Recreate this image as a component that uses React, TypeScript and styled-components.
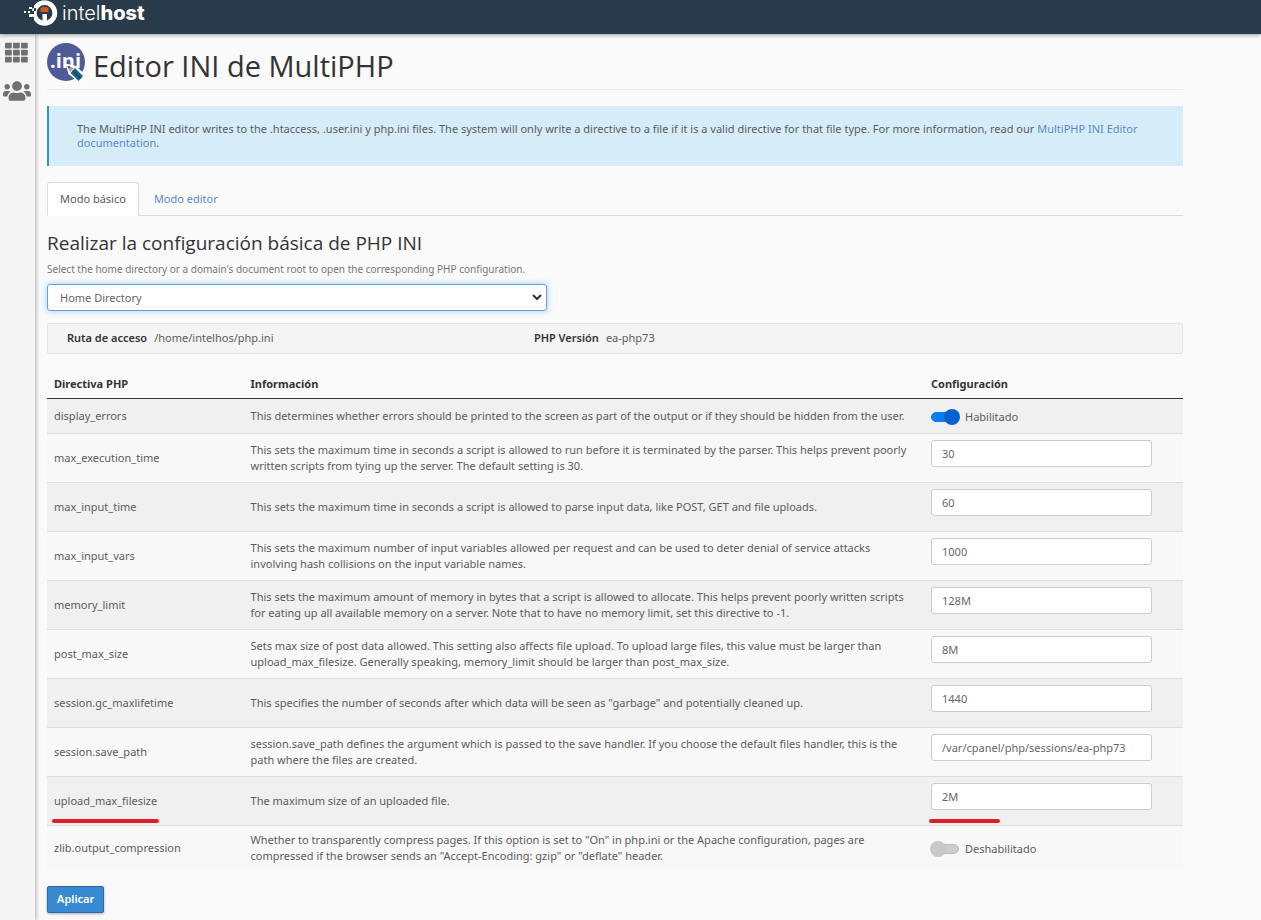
import React, { useState } from "react";
import styled, { createGlobalStyle, css } from "styled-components";
import { FaUsers } from "react-icons/fa";

const GlobalStyle = createGlobalStyle`
  * { box-sizing: border-box; }
  body {
    margin: 0;
    background: #fafafa;
    color: #5c5c5c;
    font-family: "Noto Sans", "Open Sans", sans-serif;
    font-size: 11px;
    line-height: 16px;
  }
  input, select, button { font: inherit; }
`;

const Page = styled.div`
  display: flex;
  flex-direction: column;
  min-height: 100vh;
`;

const TopBar = styled.header`
  display: flex;
  height: 34px;
  padding-left: 24px;
  background: #293a4a;
  box-shadow: 0 1px 4px rgba(0, 0, 0, 0.4);
  z-index: 2;
`;

const Brand = styled.a`
  display: flex;
  align-items: flex-start;
  gap: 4px;
  color: #fff;
  text-decoration: none;
`;

const BrandName = styled.span`
  font-family: Inter, sans-serif;
  font-size: 20px;
  line-height: 26px;
  font-weight: 300;
  strong { font-weight: 800; }
`;

const Body = styled.div`
  display: flex;
  flex: 1;
`;

const Sidebar = styled.nav`
  display: flex;
  flex-direction: column;
  align-items: center;
  gap: 14px;
  flex: 0 0 35px;
  padding: 8px 2px 0 0;
  background: #f4f4f4;
  box-shadow: 0 0 5px rgba(0, 0, 0, 0.45);
`;

const SideLink = styled.a`
  display: flex;
  color: #707070;
`;

const Main = styled.main`
  flex: 1;
  min-width: 0;
  max-width: 1160px;
  padding: 8px 12px;
`;

const PageHeader = styled.div`
  display: flex;
  align-items: flex-start;
  gap: 6px;
  height: 48px;
  border-bottom: 1px solid #ececec;
`;

const Title = styled.h1`
  margin: 4px 0 0;
  color: #333;
  font-family: "Open Sans", sans-serif;
  font-size: 29px;
  line-height: 40px;
  font-weight: 400;
`;

const Callout = styled.div`
  margin-top: 16px;
  padding: 16px 28px;
  border-left: 2px solid #2a9bb5;
  background: #d6edf9;
  line-height: 14px;
  min-height: 60px;
`;

const Link = styled.a`
  color: #5c8ac4;
  text-decoration: none;
`;

const Tabs = styled.div`
  display: flex;
  gap: 2px;
  margin-top: 16px;
  border-bottom: 1px solid #ddd;
`;

const Tab = styled.button<{ $active?: boolean }>`
  height: 34px;
  margin-bottom: -1px;
  padding: 0 12px;
  border: 1px solid transparent;
  border-radius: 3px 3px 0 0;
  background: transparent;
  color: #5c8ac4;
  ${(p) =>
    p.$active &&
    css`
      border-color: #ddd #ddd #fff;
      background: #fff;
      color: #5c5c5c;
    `}
`;

const SectionTitle = styled.h2`
  margin: 15px 0 0;
  color: #333;
  font-family: "Open Sans", sans-serif;
  font-size: 19px;
  line-height: 24px;
  font-weight: 400;
`;

const Hint = styled.label`
  display: block;
  margin-top: 6px;
  color: #777;
  font-size: 10px;
`;

const SelectBox = styled.div`
  position: relative;
  width: 44%;
  margin-top: 7px;
  svg {
    position: absolute;
    right: 5px;
    top: 10px;
    pointer-events: none;
  }
`;

const Select = styled.select`
  display: block;
  width: 100%;
  height: 27px;
  padding: 0 12px;
  appearance: none;
  border: 1px solid #66a0d8;
  border-radius: 3px;
  background: #fff;
  color: #666;
  outline: none;
  box-shadow: 0 0 6px rgba(102, 175, 233, 0.6);
`;

const InfoBar = styled.dl`
  display: flex;
  margin: 12px 0 0;
  padding: 6px 19px;
  border: 1px solid #e3e3e3;
  border-radius: 2px;
  background: #f4f4f4;
  min-height: 31px;
`;

const InfoItem = styled.div`
  display: flex;
  gap: 7px;
  flex: 0 0 42.6%;
  dt { color: #333; font-weight: 600; }
  dd { margin: 0; }
`;

const Table = styled.table`
  width: 100%;
  margin-top: 16px;
  table-layout: fixed;
  border-collapse: collapse;
`;

const HeadCell = styled.th<{ $width?: string }>`
  width: ${(p) => p.$width ?? "auto"};
  height: 28px;
  padding: 0 7px;
  border-bottom: 1px solid #333;
  color: #333;
  font-weight: 700;
  text-align: left;
`;

const Row = styled.tr`
  background: #f8f8f8;
  &:nth-child(odd) { background: #f0f0f0; }
  & + & { border-top: 1px solid #ddd; }
`;

const Cell = styled.td<{ $mark?: number }>`
  position: relative;
  height: 35px;
  padding: 6px 7px;
  ${(p) =>
    p.$mark &&
    css`
      &::after {
        content: "";
        position: absolute;
        left: 5px;
        bottom: 2px;
        width: ${p.$mark}px;
        height: 4px;
        border-radius: 2px;
        background: #dd2025;
      }
    `}
`;

const TextInput = styled.input`
  display: block;
  width: 90%;
  height: 27px;
  margin-bottom: 9px;
  padding: 0 10px;
  border: 1px solid #ccc;
  border-radius: 3px;
  background: #fff;
  color: #666;
`;

const SwitchLabel = styled.label`
  display: flex;
  align-items: center;
  gap: 6px;
  padding-top: 2px;
`;

const Switch = styled.input`
  position: relative;
  width: 28px;
  height: 10px;
  margin: 0;
  appearance: none;
  border: 1px solid #bbb;
  border-radius: 5px;
  background: #ccc;
  &::before {
    content: "";
    position: absolute;
    top: -4px;
    left: -2px;
    width: 16px;
    height: 16px;
    border-radius: 50%;
    background: #c8c8c8;
  }
  &:checked {
    border-color: #0a7bf0;
    background: #0a7bf0;
  }
  &:checked::before {
    left: 12px;
    background: #0561cf;
  }
`;

const ApplyButton = styled.button`
  display: block;
  height: 27px;
  margin-top: 16px;
  padding: 0 9px;
  border: 1px solid #2a6ba8;
  border-radius: 2px;
  background: #3889cf;
  color: #fff;
  font-weight: 600;
  box-shadow: 0 1px 3px rgba(0, 0, 0, 0.3);
`;

type Directive = { name: string; info: string; value: string | boolean; marked?: boolean };

const directives: Directive[] = [
  { name: "display_errors", info: "This determines whether errors should be printed to the screen as part of the output or if they should be hidden from the user.", value: true },
  { name: "max_execution_time", info: "This sets the maximum time in seconds a script is allowed to run before it is terminated by the parser. This helps prevent poorly written scripts from tying up the server. The default setting is 30.", value: "30" },
  { name: "max_input_time", info: "This sets the maximum time in seconds a script is allowed to parse input data, like POST, GET and file uploads.", value: "60" },
  { name: "max_input_vars", info: "This sets the maximum number of input variables allowed per request and can be used to deter denial of service attacks involving hash collisions on the input variable names.", value: "1000" },
  { name: "memory_limit", info: "This sets the maximum amount of memory in bytes that a script is allowed to allocate. This helps prevent poorly written scripts for eating up all available memory on a server. Note that to have no memory limit, set this directive to -1.", value: "128M" },
  { name: "post_max_size", info: "Sets max size of post data allowed. This setting also affects file upload. To upload large files, this value must be larger than upload_max_filesize. Generally speaking, memory_limit should be larger than post_max_size.", value: "8M" },
  { name: "session.gc_maxlifetime", info: "This specifies the number of seconds after which data will be seen as \"garbage\" and potentially cleaned up.", value: "1440" },
  { name: "session.save_path", info: "session.save_path defines the argument which is passed to the save handler. If you choose the default files handler, this is the path where the files are created.", value: "/var/cpanel/php/sessions/ea-php73" },
  { name: "upload_max_filesize", info: "The maximum size of an uploaded file.", value: "2M", marked: true },
  { name: "zlib.output_compression", info: "Whether to transparently compress pages. If this option is set to \"On\" in php.ini or the Apache configuration, pages are compressed if the browser sends an \"Accept-Encoding: gzip\" or \"deflate\" header.", value: false },
];

const BrandMark = () => (
  <svg width="34" height="26" viewBox="0 0 34 26" aria-hidden="true">
    <circle cx="20.500" cy="13" r="10.300" fill="none" stroke="#fff" strokeWidth="4.800" />
    <path d="M7 5h3v3H7zM7 11h3v3H7zM10 8h2v3h-2zM7 17h3v3H7z" fill="#293a4a" />
    <path d="M5 7h3v2H5zM5 14h3v3H5zM4 11h2v2H4zM0 11h2v2H0z" fill="#fff" />
    <path d="M16.500 8.500L18 7h5l1.500 1.500V12h-8z" fill="#d9541e" />
    <path d="M18.500 14h4.500v9h-4.500z" fill="#fff" />
  </svg>
);

const GridIcon = () => (
  <svg width="23" height="21" viewBox="0 0 23 21" fill="currentColor" aria-hidden="true">
    {[1, 8, 15].map((y) =>
      [0, 8, 16].map((x) => <rect key={`${x}-${y}`} x={x} y={y - 0.3} width="6.800" height="5.800" rx="1" />)
    )}
  </svg>
);

const IniIcon = () => (
  <svg width="40" height="40" viewBox="0 0 40 40" aria-hidden="true">
    <circle cx="19" cy="20" r="19" fill="#4f5b98" />
    <text x="3" y="26" fill="#fff" fontFamily="Open Sans, sans-serif" fontSize="20" fontWeight="700">.ini</text>
    <path d="M18.500 21.500L29 24l10 9.500-7 7L21.500 32z" fill="#fff" />
    <path d="M20.500 24l6.500 2-4 4z" fill="#a5a5a5" />
    <path d="M20.500 24l3 .8-2 2z" fill="#333" />
    <path d="M28 26l8 8-4.500 5L23.500 31z" fill="#1a6590" />
    <path d="M25.800 28.500l8 8" stroke="#0e4a70" strokeWidth="1.500" />
  </svg>
);

const Chevron = () => (
  <svg width="10" height="7" viewBox="0 0 10 7" aria-hidden="true">
    <path d="M1 1l4 4 4-4" fill="none" stroke="#333" strokeWidth="2" />
  </svg>
);

function Toggle({ name, initial }: { name: string; initial: boolean }) {
  const [on, setOn] = useState(initial);
  return (
    <SwitchLabel>
      <Switch type="checkbox" name={name} checked={on} onChange={() => setOn(!on)} />
      {on ? "Habilitado" : "Deshabilitado"}
    </SwitchLabel>
  );
}

export default function App() {
  return (
    <Page>
      <GlobalStyle />
      <TopBar>
        <Brand href="#">
          <BrandMark />
          <BrandName>intel<strong>host</strong></BrandName>
        </Brand>
      </TopBar>
      <Body>
        <Sidebar>
          <SideLink href="#" aria-label="Herramientas"><GridIcon /></SideLink>
          <SideLink href="#" aria-label="Usuarios"><FaUsers size={28} /></SideLink>
        </Sidebar>
        <Main>
          <PageHeader>
            <IniIcon />
            <Title>Editor INI de MultiPHP</Title>
          </PageHeader>
          <Callout>
            The MultiPHP INI editor writes to the .htaccess, .user.ini y php.ini files. The system will only write a directive to a file if it is a valid directive for that file type. For more information, read our <Link href="#">MultiPHP INI Editor documentation</Link>.
          </Callout>
          <Tabs role="tablist">
            <Tab role="tab" aria-selected="true" $active>Modo básico</Tab>
            <Tab role="tab" aria-selected="false">Modo editor</Tab>
          </Tabs>
          <SectionTitle>Realizar la configuración básica de PHP INI</SectionTitle>
          <Hint htmlFor="location">Select the home directory or a domain's document root to open the corresponding PHP configuration.</Hint>
          <SelectBox>
            <Select id="location" defaultValue="home">
              <option value="home">Home Directory</option>
            </Select>
            <Chevron />
          </SelectBox>
          <InfoBar>
            <InfoItem><dt>Ruta de acceso</dt><dd>/home/intelhos/php.ini</dd></InfoItem>
            <InfoItem><dt>PHP Versión</dt><dd>ea-php73</dd></InfoItem>
          </InfoBar>
          <Table>
            <thead>
              <tr>
                <HeadCell $width="17.3%">Directiva PHP</HeadCell>
                <HeadCell>Información</HeadCell>
                <HeadCell $width="22.8%">Configuración</HeadCell>
              </tr>
            </thead>
            <tbody>
              {directives.map((d) => (
                <Row key={d.name}>
                  <Cell $mark={d.marked ? 107 : undefined}>{d.name}</Cell>
                  <Cell>{d.info}</Cell>
                  <Cell $mark={d.marked ? 71 : undefined}>
                    {typeof d.value === "boolean" ? (
                      <Toggle name={d.name} initial={d.value} />
                    ) : (
                      <TextInput type="text" name={d.name} aria-label={d.name} defaultValue={d.value} />
                    )}
                  </Cell>
                </Row>
              ))}
            </tbody>
          </Table>
          <ApplyButton type="button">Aplicar</ApplyButton>
        </Main>
      </Body>
    </Page>
  );
}
